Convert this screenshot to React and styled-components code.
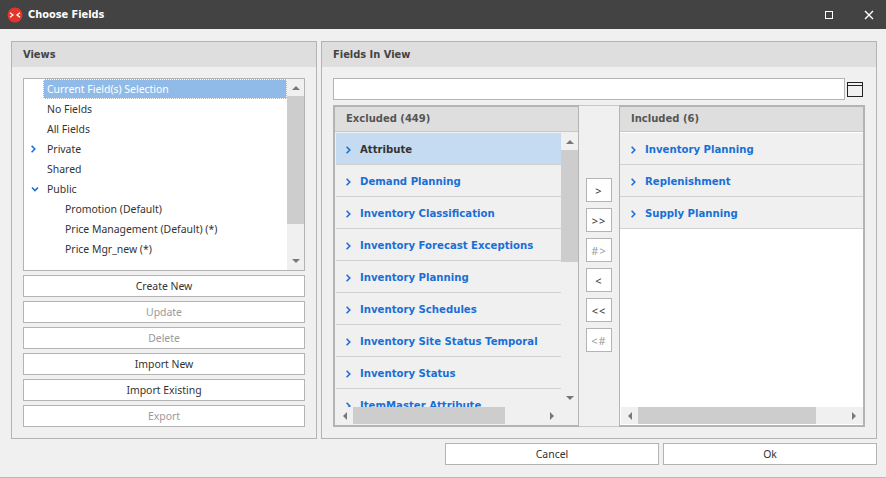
import React from "react";
import styled, { createGlobalStyle } from "styled-components";

const Global = createGlobalStyle`
  html, body { margin: 0; padding: 0; background: #f0f0f0; }
  * { box-sizing: border-box; }
`;
const FONT = `"Noto Sans", "DejaVu Sans", sans-serif`;
const BOLD = `"DejaVu Sans", Verdana, sans-serif`;
const LINE = "#b4b4b4";

const Windowed = styled.div`
  width: 886px; height: 478px; background: #f0f0f0; overflow: hidden;
  display: flex; flex-direction: column;
  font-family: ${FONT}; font-size: 10.45px; color: #333;
  border-bottom: 1px solid #b9b9b9;
`;
const TitleBar = styled.header`
  height: 29px; flex: none; background: #434343; color: #fff;
  display: flex; align-items: center; padding: 0 0 0 7px;
`;
const Title = styled.span`
  font-family: ${BOLD}; font-weight: 700; font-size: 9.8px; margin-left: 5px; flex: 1;
`;
const WinBtn = styled.button`
  width: 16px; height: 16px; padding: 0; border: 0; background: none;
  display: flex; align-items: center; justify-content: center;
  margin-right: ${p => p.$mr}px;
`;
const Main = styled.main`
  display: flex; gap: 4px; padding: 12px 9px 0 11px; flex: none;
`;
const Panel = styled.section`
  width: ${p => p.$w}px; height: 398px; border: 1px solid ${LINE};
  display: flex; flex-direction: column;
`;
const PanelHead = styled.h2`
  margin: 0; height: 25px; flex: none; background: #dedede;
  font-family: ${BOLD}; font-size: 9.9px; font-weight: 700; color: #444; line-height: 25px; padding-left: 11px;
`;
const ViewsBody = styled.div`
  padding: 11px 11px 0; display: flex; flex-direction: column; gap: 4px;
`;
const ViewList = styled.div`
  height: 193px; border: 1px solid ${LINE}; background: #fff; display: flex;
`;
const ViewRows = styled.ul`
  list-style: none; margin: 0; padding: 0; flex: 1; min-width: 0;
`;
const ViewRow = styled.li`
  height: 20px; display: flex; align-items: center; position: relative;
  padding: 0 0 1px ${p => (p.$depth ? 41 : 23)}px;
`;
const ViewChevron = styled.span`
  position: absolute; left: 7px; top: 6px; display: flex;
`;
const ViewLabel = styled.span`
  ${p => p.$selected ? `
    position: absolute; left: 19px; right: 0; top: 0; height: 20px;
    background: #90bbe9; color: #fff; padding-left: 4px; line-height: 20px;
    outline: 1px dotted #fff; outline-offset: -1px;
  ` : ""}
`;
const VBar = styled.div`
  width: 17px; flex: none; background: #f0f0f0;
  display: flex; flex-direction: column;
`;
const ArrowBox = styled.div`
  width: 17px; height: 17px; flex: none; display: flex; align-items: center; justify-content: center;
`;
const Thumb = styled.div`
  background: #cdcdcd; flex: none;
  ${p => p.$v ? `height: ${p.$size}px;` : `width: ${p.$size}px;`}
`;
const Spacer = styled.div`flex: 1;`;
const Btn = styled.button`
  width: ${p => p.$w || 282}px; height: 22px; flex: none; background: #fff;
  border: 1px solid ${LINE}; padding: 0 0 1px;
  font-family: ${FONT}; font-size: 10.45px;
  color: ${p => p.disabled ? "#9a9a9a" : "#333"};
`;
const FieldsBody = styled.div`
  padding: 11px 11px 0; display: flex; flex-direction: column; gap: 5px;
`;
const SearchRow = styled.div`
  display: flex; align-items: center; gap: 2px;
`;
const SearchInput = styled.input`
  width: 512px; height: 22px; border: 1px solid ${LINE}; background: #fff; padding: 0; outline: 0;
`;
const Shuttle = styled.div`
  display: flex; height: 322px;
`;
const ListBox = styled.div`
  width: 246px; height: 322px; background: ${p => p.$white ? "#fff" : "#f0f0f0"};
  border: 2px solid ${LINE};
  ${p => p.$side === "left" ? "border-right-width: 1px;" : "border-left-width: 1px;"}
  display: flex; flex-direction: column; overflow: hidden;
`;
const ListHead = styled.h3`
  margin: 0; height: 24px; flex: none; background: #dedede; color: #555;
  font-family: ${BOLD}; font-size: 10px; font-weight: 700; line-height: 23px;
  padding-left: ${p => p.$pad}px;
`;
const ListMid = styled.div`
  flex: 1; min-height: 0; display: flex; padding-top: 1px;
  border-top: 1px solid #c8c8c8; padding-left: ${p => p.$pl}px; overflow: hidden;
`;
const Rows = styled.div`
  flex: 1; min-width: 0; overflow: hidden;
`;
const Row = styled.div`
  height: 32px; display: flex; align-items: center; gap: 6px; flex: none;
  padding: 2px 0 0 ${p => p.$pad}px; border-bottom: 1px solid #d2d2d2;
  background: ${p => p.$active ? "#c5dbf2" : "#f0f0f0"};
  color: ${p => p.$active ? "#333" : "#1a6fd6"};
  font-family: ${BOLD}; font-weight: 700; font-size: 10.15px; white-space: nowrap;
`;
const HBar = styled.div`
  height: 17px; flex: none; display: flex; background: #f0f0f0; margin: 0 ${p => p.$mr}px 1px ${p => p.$ml}px;
`;
const Movers = styled.div`
  width: 40px; flex: none; padding: 72px 0 0 7px;
  border-top: 1px solid #c8c8c8; border-bottom: 1px solid #c8c8c8;
  display: flex; flex-direction: column; gap: 6px;
`;
const MoveBtn = styled.button`
  width: 26px; height: 24px; background: #fff; border: 1px solid ${LINE}; padding: 0;
  font-family: ${FONT}; font-size: 11px; letter-spacing: 1px;
  color: ${p => p.disabled ? "#9a9a9a" : "#333"};
`;
const Footer = styled.footer`
  display: flex; justify-content: flex-end; gap: 4px; padding: 4px 9px 0 0;
`;

const Tri = ({ dir }) => {
  const d = { up: "M0 5 L4 1 L8 5Z", down: "M0 0 L4 4 L8 0Z", left: "M5 0 L1 4 L5 8Z", right: "M0 0 L4 4 L0 8Z" }[dir];
  const vert = dir === "up" || dir === "down";
  return (
    <svg width={vert ? 8 : 5} height={vert ? 5 : 8} viewBox={vert ? "0 0 8 5" : "0 0 5 8"}>
      <path d={d} fill="#787878" />
    </svg>
  );
};
const Chevron = ({ open }) => (
  <svg width="8" height="8" viewBox="0 0 8 8" style={{ flex: "none" }}>
    <path d={open ? "M1 2.5 L4 5.5 L7 2.5" : "M.6 .8 L3.8 4 L.6 7.2"} fill="none" stroke="#1a6fd6" strokeWidth="1.6" />
  </svg>
);

const views = [
  { t: "Current Field(s) Selection", selected: true },
  { t: "No Fields" },
  { t: "All Fields" },
  { t: "Private", chev: "right" },
  { t: "Shared" },
  { t: "Public", chev: "down" },
  { t: "Promotion (Default)", depth: 1 },
  { t: "Price Management (Default) (*)", depth: 1 },
  { t: "Price Mgr_new (*)", depth: 1 },
];
const excluded = ["Attribute", "Demand Planning", "Inventory Classification", "Inventory Forecast Exceptions", "Inventory Planning", "Inventory Schedules", "Inventory Site Status Temporal", "Inventory Status", "ItemMaster Attribute"];
const included = ["Inventory Planning", "Replenishment", "Supply Planning"];
const actions = [["Create New"], ["Update", true], ["Delete", true], ["Import New"], ["Import Existing"], ["Export", true]];
const moves = [[">"], [">>"], ["#>", true], ["<"], ["<<"], ["<#", true]];

export default function App() {
  return (
    <Windowed>
      <Global />
      <TitleBar>
        <svg width="16" height="16" viewBox="0 0 16 16">
          <circle cx="8" cy="8" r="7.5" fill="#e5352b" />
          <path d="M3 5.8 L6 8 L3 10.2 M13 5.8 L10 8 L13 10.2" fill="none" stroke="#fff" strokeWidth="1.2" />
        </svg>
        <Title>Choose Fields</Title>
        <WinBtn $mr={24}>
          <svg width="8" height="8" viewBox="0 0 8 8"><rect x=".5" y=".5" width="7" height="7" fill="none" stroke="#fff" /></svg>
        </WinBtn>
        <WinBtn $mr={9}>
          <svg width="10" height="10" viewBox="0 0 10 10"><path d="M1 1 L9 9 M9 1 L1 9" stroke="#fff" strokeWidth="1.4" /></svg>
        </WinBtn>
      </TitleBar>
      <Main>
        <Panel $w={306}>
          <PanelHead>Views</PanelHead>
          <ViewsBody>
            <ViewList>
              <ViewRows>
                {views.map(v => (
                  <ViewRow key={v.t} $depth={v.depth}>
                    {v.chev && <ViewChevron><Chevron open={v.chev === "down"} /></ViewChevron>}
                    <ViewLabel $selected={v.selected}>{v.t}</ViewLabel>
                  </ViewRow>
                ))}
              </ViewRows>
              <VBar>
                <ArrowBox><Tri dir="up" /></ArrowBox>
                <Thumb $v $size={128} />
                <Spacer />
                <ArrowBox><Tri dir="down" /></ArrowBox>
              </VBar>
            </ViewList>
            {actions.map(([t, d]) => <Btn key={t} disabled={d}>{t}</Btn>)}
          </ViewsBody>
        </Panel>
        <Panel $w={556}>
          <PanelHead>Fields In View</PanelHead>
          <FieldsBody>
            <SearchRow>
              <SearchInput />
              <svg width="16" height="15" viewBox="0 0 16 15">
                <rect x=".5" y=".5" width="15" height="14" fill="none" stroke="#222" />
                <path d="M0 3.5 H16" stroke="#222" />
              </svg>
            </SearchRow>
            <Shuttle>
              <ListBox $side="left">
                <ListHead $pad={11}>Excluded (449)</ListHead>
                <ListMid $pl={1}>
                  <Rows>
                    {excluded.map((t, i) => (
                      <Row key={t} $pad={10} $active={i === 0}><Chevron />{t}</Row>
                    ))}
                  </Rows>
                  <VBar>
                    <ArrowBox><Tri dir="up" /></ArrowBox>
                    <Thumb $v $size={112} />
                    <Spacer />
                    <ArrowBox><Tri dir="down" /></ArrowBox>
                  </VBar>
                </ListMid>
                <HBar $ml={1} $mr={17}>
                  <ArrowBox><Tri dir="left" /></ArrowBox>
                  <Thumb $size={152} />
                  <Spacer />
                  <ArrowBox><Tri dir="right" /></ArrowBox>
                </HBar>
              </ListBox>
              <Movers>
                {moves.map(([t, d]) => <MoveBtn key={t} disabled={d}>{t}</MoveBtn>)}
              </Movers>
              <ListBox $side="right" $white>
                <ListHead $pad={11}>Included (6)</ListHead>
                <ListMid $pl={0}>
                  <Rows>
                    {included.map(t => <Row key={t} $pad={11}><Chevron />{t}</Row>)}
                  </Rows>
                </ListMid>
                <HBar $ml={1} $mr={0}>
                  <ArrowBox><Tri dir="left" /></ArrowBox>
                  <Thumb $size={178} />
                  <Spacer />
                  <ArrowBox><Tri dir="right" /></ArrowBox>
                </HBar>
              </ListBox>
            </Shuttle>
          </FieldsBody>
        </Panel>
      </Main>
      <Footer>
        <Btn $w={214}>Cancel</Btn>
        <Btn $w={214}>Ok</Btn>
      </Footer>
    </Windowed>
  );
}
